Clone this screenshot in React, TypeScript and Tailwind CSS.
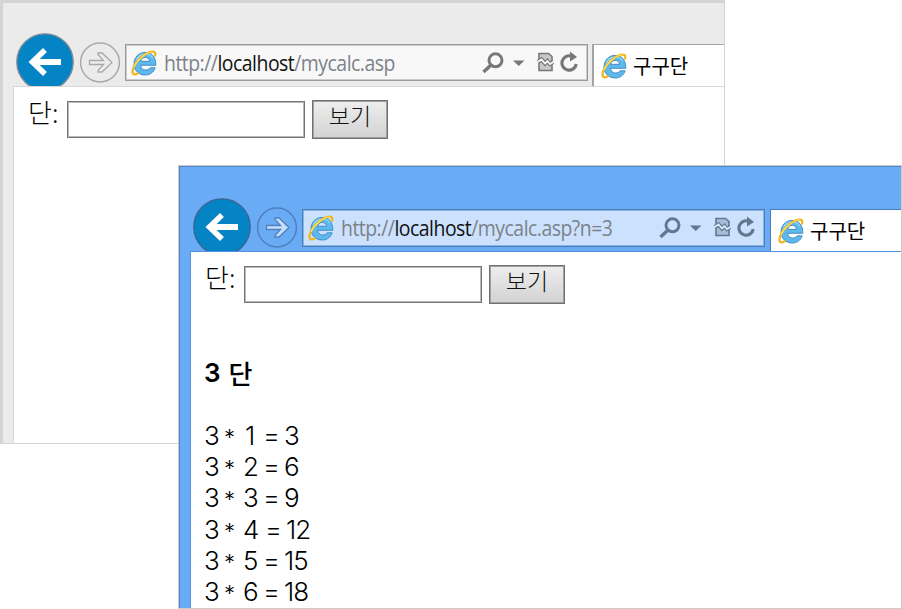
import React from "react";

type Theme = "light" | "blue";

function BackIcon({ blue }: { blue: boolean }) {
  return (
    <svg width="58" height="58" viewBox="0 0 58 58" className="mt-[33px] shrink-0">
      <circle cx="29" cy="29" r="28.2" fill="#0484c5" stroke={blue ? "#3c6391" : "#7f8b92"} strokeWidth="1.3" />
      <path d="M45 29H18" fill="none" stroke="#fff" strokeWidth="6" />
      <path d="M29 17L16.500 29 29 41" fill="none" stroke="#fff" strokeWidth="5.6" />
    </svg>
  );
}

function ForwardIcon({ blue }: { blue: boolean }) {
  return (
    <svg width="41" height="41" viewBox="0 0 41 41" className="ml-1.5 mt-[42px] shrink-0">
      <circle cx="20" cy="20.500" r="19.400" fill="none" stroke={blue ? "#4f80bd" : "#a9a9a9"} strokeWidth="1.5" />
      <path
        d="M9.500 18.500h14l-5.500-6V11h4L32 20.500 22 30h-4v-1.500l5.500-6h-14z"
        fill={blue ? "#c4dffc" : "#ededed"}
        stroke={blue ? "#4f80bd" : "#a9a9a9"}
        strokeWidth="1.3"
      />
    </svg>
  );
}

function IELogo({ className }: { className: string }) {
  return (
    <svg width="26" height="26" viewBox="0 0 26 26" className={className}>
      <path
        d="M24.800 15.300H9.600c.3 3.100 2.300 4.700 5 4.700 2.100 0 3.600-.8 4.500-2.200h5.100c-1.500 4.500-5.100 7.200-9.900 7.200C7.700 25 3 20.400 3 13.900 3 7.400 7.700 2.400 14 2.400c6.700 0 11.100 4.700 10.800 12.900zM9.700 11.300h8.900c-.4-2.600-2-3.900-4.400-3.900-2.300 0-4 1.400-4.500 3.900z"
        fill="#5db9ed"
        stroke="#3a87c0"
        strokeWidth=".9"
      />
      <path d="M5.500 10C7 6.200 10.500 4 14 4c3.500 0 6.200 1.400 7.800 4" fill="none" stroke="#9ddcfb" strokeWidth="1.2" />
      <path
        d="M23.600 6.500C25 3.600 24.500 1.800 21.700 1.700 16 1.600 5.500 9.600 2.200 18.300c-1.500 4-.7 6.300 2 6 1-.1 2.200-.6 3.500-1.400"
        fill="none"
        stroke="#f3b41b"
        strokeWidth="2.2"
      />
      <path d="M21.500 1.700C15.500 2.200 6.500 9 3 16.900" fill="none" stroke="#ffe25a" strokeWidth="1.1" />
    </svg>
  );
}

function AddressIcons({ blue }: { blue: boolean }) {
  const c = blue ? "#63788e" : "#777";
  const page = blue ? "#a4bdd8" : "#c8c8c8";
  return (
    <svg width="98" height="24" viewBox="0 0 98 24" className="ml-auto mr-2 shrink-0">
      <circle cx="14.500" cy="9.300" r="6.500" fill="none" stroke={c} strokeWidth="3" />
      <path d="M10 14l-7.500 7" stroke={c} strokeWidth="3.500" />
      <path d="M32 9.500h11.500L37.700 15z" fill={c} />
      <path d="M58 2.500h9.500L71 5.500V19.500H58z" fill={page} stroke={c} strokeWidth="1.6" />
      <path d="M57 11l3.500-2.500 3.500 4 2.500-2.500 2.500 3 3-2" fill="none" stroke={c} strokeWidth="4.200" />
      <path d="M56.500 11l4-2.500 3.500 4 2.500-2.500 2.500 3 3.500-2" fill="none" stroke={blue ? "#d9e9fc" : "#f8f8f8"} strokeWidth="1.800" />
      <path d="M90.500 5.200A7.200 7.200 0 1 0 95.200 13" fill="none" stroke={c} strokeWidth="3.200" />
      <path d="M89 .5l7 5.500-7 4.500z" fill={c} />
    </svg>
  );
}

function BrowserWindow({ theme, query, children }: { theme: Theme; query?: string; children?: React.ReactNode }) {
  const blue = theme === "blue";
  return (
    <div
      className={
        blue
          ? "flex h-[444px] w-[724px] flex-col overflow-hidden border border-[#ccc] bg-[#6aabf6] shadow-[inset_1px_1px_0_#4d85c6]"
          : "flex h-[444px] w-[725px] flex-col overflow-hidden border-b border-r border-[#d3d3d3] bg-[#ebebeb] shadow-[inset_3px_3px_0_#d4d4d4]"
      }
    >
      <div className={blue ? "-mt-px ml-[14px] flex h-[86px] shrink-0 overflow-hidden" : "ml-4 flex h-[86px] shrink-0 overflow-hidden"}>
        <BackIcon blue={blue} />
        <ForwardIcon blue={blue} />
        <div
          className={
            blue
              ? "ml-1 mt-11 flex h-[38px] w-[463px] shrink-0 items-center border border-[#477eb9] bg-[#cbe1fd] shadow-[inset_0_0_0_1px_#8bb4e0]"
              : "ml-1 mt-11 flex h-[37px] w-[463px] shrink-0 items-center border border-[#999] bg-[#f8f8f8] shadow-[inset_0_0_0_1px_#ccc]"
          }
        >
          <IELogo className="ml-[5px] shrink-0" />
          <div className="ml-[7px] w-[300px] origin-left scale-x-[0.925] whitespace-nowrap font-['Open_Sans','Noto_Sans',sans-serif] text-[21px] leading-7 tracking-[-0.55px] text-[#7c8288]">
            http://<span className="text-[#111]">localhost</span>/mycalc.asp{query}
          </div>
          <AddressIcons blue={blue} />
        </div>
        <div
          className={
            blue
              ? "ml-[5px] mt-11 flex h-[42px] flex-1 items-center border-l border-t border-[#477eb9] bg-white"
              : "ml-1 mt-11 flex h-[42px] flex-1 items-center border-l-2 border-t border-[#a3a3a3] bg-white"
          }
        >
          <IELogo className="ml-[7px] shrink-0" />
          <span className="ml-1.5 font-['Noto_Sans_CJK_KR',sans-serif] text-[20px] leading-6 text-black">구구단</span>
        </div>
      </div>
      <div
        className={
          blue
            ? "ml-[11px] flex-1 overflow-hidden border-l border-t border-[#5592de] bg-white"
            : "ml-[13px] flex-1 overflow-hidden border-l border-t border-[#d8d8d8] bg-white"
        }
      >
        <div className="ml-3.5 mt-3 flex h-10 items-start">
          <span className="-mt-px w-[39px] whitespace-nowrap font-['Noto_Sans_CJK_KR',sans-serif] text-[26px] font-light leading-7 text-black">단:</span>
          <div className="mt-0.5 h-[37px] w-[238px] border border-[#757575] bg-white shadow-[inset_0_0_0_1px_#b9b9b9]" />
          <div className="ml-[7px] mt-px flex h-[39px] w-[76px] justify-center border border-[#707070] bg-gradient-to-b from-[#eeeeee] to-[#d2d2d2] font-['Noto_Sans_CJK_KR',sans-serif] text-[23px] font-light leading-[28px] text-[#111] shadow-[inset_0_0_0_1px_#a0a0a0]">
            보기
          </div>
        </div>
        {children}
      </div>
    </div>
  );
}

const rows = [1, 2, 3, 4, 5, 6];

export default function App() {
  return (
    <div className="relative h-[609px] w-[902px] overflow-hidden bg-white">
      <div className="absolute left-0 top-0">
        <BrowserWindow theme="light" />
      </div>
      <div className="absolute left-[178px] top-[165px]">
        <BrowserWindow theme="blue" query="?n=3">
          <div className="ml-[13px] text-black">
            <h1 className="mt-[53px] flex gap-[9px] font-['Noto_Sans_CJK_KR',sans-serif] text-[26px] font-bold leading-8">
              <span className="font-['Inter'] font-semibold tracking-[-1px]">3</span>
              <span className="font-medium">단</span>
            </h1>
            <div className="mt-[31px] font-['Inter',sans-serif] text-[26px] font-light leading-[31.2px] tracking-[-1px]">
              {rows.map((n) => (
                <p key={n} className="flex h-[31.2px]">
                  <span className="w-5">3</span>
                  <span className="w-[19px] pt-1 text-[22px] leading-[27px]">*</span>
                  <span className={n === 1 ? "w-[20px] pl-0.5" : "w-[20px]"}>{n}</span>
                  <span className={n === 4 ? "w-[23px] pl-0.5" : "w-[21px]"}>=</span>
                  <span>{3 * n}</span>
                </p>
              ))}
            </div>
          </div>
        </BrowserWindow>
      </div>
    </div>
  );
}
